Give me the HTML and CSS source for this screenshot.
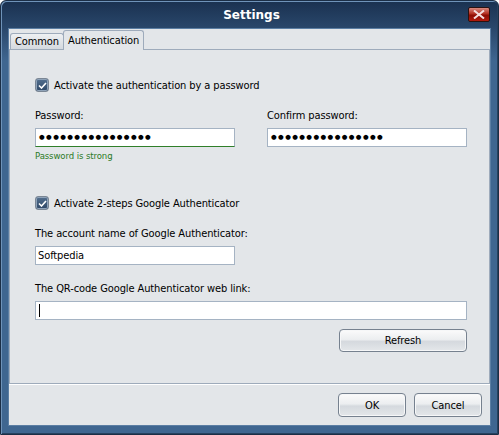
FILE: index.html
```html
<!DOCTYPE html>
<html>
  <head>
    <title>Settings</title>
    <link rel="stylesheet" href="styles.css">
  </head>
  <body>
    <div class="window">
      <div class="titlebar">
        <span></span>
        <span class="title">Settings</span>
        <span class="close">
          <svg width="12" height="9" viewBox="0 0 12 9"><path d="M1 0.5 L11 8.5 M11 0.5 L1 8.5" stroke="#f4dede" stroke-width="2"/></svg>
        </span>
      </div>
      <div class="client">
        <div class="tabs">
          <div class="tab">Common</div>
          <div class="tab active">Authentication</div>
        </div>
        <div class="panel">
          <label class="check"><span class="box"><svg width="9" height="7" viewBox="0 0 9 7"><path d="M1 3.5 L3.5 6 L8 1" fill="none" stroke="#fff" stroke-width="1.6"/></svg></span>Activate the authentication by a password</label>
          <div class="pair">
            <div class="field">
              <div class="label">Password:</div>
              <div class="input strong dots">&#9679;&#9679;&#9679;&#9679;&#9679;&#9679;&#9679;&#9679;&#9679;&#9679;&#9679;&#9679;&#9679;&#9679;&#9679;&#9679;</div>
              <div class="hint">Password is strong</div>
            </div>
            <div class="field">
              <div class="label">Confirm password:</div>
              <div class="input dots">&#9679;&#9679;&#9679;&#9679;&#9679;&#9679;&#9679;&#9679;&#9679;&#9679;&#9679;&#9679;&#9679;&#9679;&#9679;&#9679;</div>
            </div>
          </div>
          <label class="check second"><span class="box"><svg width="9" height="7" viewBox="0 0 9 7"><path d="M1 3.5 L3.5 6 L8 1" fill="none" stroke="#fff" stroke-width="1.6"/></svg></span>Activate 2-steps Google Authenticator</label>
          <div class="label account">The account name of Google Authenticator:</div>
          <div class="input">Softpedia</div>
          <div class="label qr">The QR-code Google Authenticator web link:</div>
          <div class="input wide"><span class="caret"></span></div>
          <div class="row">
            <div class="button refresh">Refresh</div>
          </div>
        </div>
        <div class="footer">
          <div class="button">OK</div>
          <div class="button">Cancel</div>
        </div>
      </div>
    </div>
  </body>
</html>
```

FILE: styles.css
```css
*{
  box-sizing:border-box;
}
body{
  margin:0;
  font-family:"DejaVu Sans Condensed","DejaVu Sans",sans-serif;
  font-size:11px;
  letter-spacing:-0.1px;
  color:#000;
}
.window{
  width:499px;
  height:435px;
  display:flex;
  flex-direction:column;
  padding:0 7px 8px 7px;
  background:linear-gradient(to bottom,#1a3150 0,#2a486c 28px,#3f6690 60px,#3f6690 100%);
  border:1px solid #1b2e46;
  border-radius:6px 6px 0 0;
  box-shadow:inset 1px 1px 0 #6f93b9,inset -1px -1px 0 #27425f;
}
.titlebar{
  height:27px;
  display:grid;
  grid-template-columns:1fr auto 1fr;
  align-items:center;
}
.title{
  color:#fff;
  font-family:"DejaVu Sans","Liberation Sans",sans-serif;
  font-weight:bold;
  font-size:12px;
  letter-spacing:0;
  padding-left:4px;
}
.close{
  justify-self:end;
  width:22px;
  height:15px;
  margin-right:1px;
  display:flex;
  align-items:center;
  justify-content:center;
  border:1px solid #2a1210;
  border-radius:2px;
  background:linear-gradient(to bottom,#d88a80 0,#b22d1e 45%,#8c0d04 55%,#b01a0c 100%);
}
.client{
  flex:1;
  display:flex;
  flex-direction:column;
  background:#e3e6e9;
  border:1px solid #5b7ea3;
}
.tabs{
  height:20px;
  display:flex;
  align-items:flex-end;
  padding-left:1px;
}
.tab{
  height:16px;
  padding:0 4px;
  border:1px solid #9eabbb;
  border-bottom:none;
  border-radius:3px 3px 0 0;
  background:linear-gradient(to bottom,#eef0f2,#d4d9df);
  line-height:15px;
}
.tab.active{
  height:20px;
  background:#e3e6e9;
  line-height:19px;
  margin-left:-1px;
  position:relative;
  top:1px;
}
.panel{
  height:335px;
  border:1px solid #9eabbb;
  padding:28px 0 0 25px;
  display:flex;
  flex-direction:column;
  align-items:flex-start;
}
.check{
  display:flex;
  align-items:center;
  height:14px;
  gap:5px;
}
.box{
  width:14px;
  height:14px;
  border:1px solid #7b8795;
  border-radius:3px;
  background:linear-gradient(to bottom,#54708f,#2e4766);
  box-shadow:inset 0 0 0 1px #8fa3b9;
  display:flex;
  align-items:center;
  justify-content:center;
}
.pair{
  display:flex;
  gap:32px;
  margin-top:17px;
}
.field{
  display:flex;
  flex-direction:column;
}
.label{
  height:14px;
  line-height:14px;
}
.input{
  width:200px;
  height:19px;
  margin-top:5px;
  border:1px solid #a5b3c3;
  background:#fff;
  padding:0 2px;
  line-height:17px;
}
.input.dots{
  font-family:"DejaVu Sans",sans-serif;
  font-size:6.5px;
  letter-spacing:1.4px;
  padding-left:3px;
}
.input.strong{
  border-bottom:1px solid #2f7f2a;
}
.hint{
  margin-top:3px;
  color:#2b7a26;
  font-size:9.5px;
}
.check.second{
  margin-top:35px;
}
.label.account{
  margin-top:17px;
}
.label.qr{
  margin-top:17px;
}
.input.wide{
  width:432px;
  display:flex;
  align-items:center;
}
.caret{
  width:1px;
  height:13px;
  margin-left:1px;
  background:#000;
}
.row{
  width:432px;
  display:flex;
  justify-content:flex-end;
  margin-top:9px;
}
.button{
  width:68px;
  height:24px;
  border:1px solid #76818f;
  border-radius:4px;
  background:linear-gradient(to bottom,#fbfbfb 0,#eceef0 45%,#d5d9de 55%,#e4e7ea 100%);
  box-shadow:inset 0 0 0 1px #f6f7f8;
  display:flex;
  align-items:center;
  justify-content:center;
}
.button.refresh{
  width:128px;
  height:23px;
}
.footer{
  flex:1;
  display:flex;
  justify-content:flex-end;
  gap:8px;
  padding:8px 8px 0 0;
  border-top:1px solid #fff;
}
```
